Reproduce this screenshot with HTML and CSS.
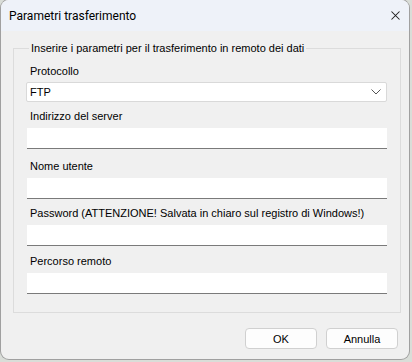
FILE: index.html
```html
<!DOCTYPE html>
<html>
<head>
<meta charset="utf-8">
<link rel="stylesheet" href="styles.css">
</head>
<body>
<div class="window">
  <div class="titlebar">
    <span class="title">Parametri trasferimento</span>
    <svg class="close" width="9" height="9" viewBox="0 0 9 9"><path d="M0.5 0.5 L8.5 8.5 M8.5 0.5 L0.5 8.5" stroke="#1a1a1a" stroke-width="1.05" fill="none"/></svg>
  </div>
  <div class="content">
    <fieldset class="group">
      <legend>Inserire i parametri per il trasferimento in remoto dei dati</legend>
      <div class="field f-proto">
        <label>Protocollo</label>
        <div class="select"><span>FTP</span>
          <svg width="10" height="6" viewBox="0 0 10 6"><path d="M0.5 0.5 L5 5 L9.5 0.5" stroke="#555" stroke-width="1" fill="none"/></svg>
        </div>
      </div>
      <div class="field f-server">
        <label>Indirizzo del server</label>
        <div class="input"></div>
      </div>
      <div class="field f-user">
        <label>Nome utente</label>
        <div class="input"></div>
      </div>
      <div class="field f-pass">
        <label>Password (ATTENZIONE! Salvata in chiaro sul registro di Windows!)</label>
        <div class="input"></div>
      </div>
      <div class="field f-path">
        <label>Percorso remoto</label>
        <div class="input"></div>
      </div>
    </fieldset>
    <div class="buttons">
      <button class="btn">OK</button>
      <button class="btn">Annulla</button>
    </div>
  </div>
</div>
</body>
</html>
```
FILE: styles.css
```css
html, body {
  margin: 0;
  padding: 0;
  width: 412px;
  height: 362px;
  overflow: hidden;
  background: #d9ddd8;
}
body {
  padding: 0 3px 3px 1px;
  box-sizing: border-box;
}
.window {
  width: 408px;
  height: 359px;
  background: #f0f0f0;
  border-radius: 8px;
  box-shadow: 0 0 0 1px #a0a0a0;
  overflow: hidden;
  display: flex;
  flex-direction: column;
}
.titlebar {
  height: 31px;
  flex: none;
  background: #eef2f9;
  display: flex;
  align-items: center;
  justify-content: space-between;
  padding: 0 9px 0 8px;
  box-sizing: border-box;
}
.title {
  font-family: Roboto, "Liberation Sans", sans-serif;
  font-size: 12px;
  color: #000;
}
.close { display: block; }
.content {
  font-family: "Liberation Sans", Arial, sans-serif;
  font-size: 11px;
  color: #000;
  padding: 11px 8px 0 12px;
  display: flex;
  flex-direction: column;
}
.group {
  margin: 0;
  border: 1px solid #dcdcdc;
  padding: 0 13px 18px 12px;
}
.group legend {
  padding: 0 2px;
  margin-left: 3px;
  line-height: 13px;
}
.field {
  display: flex;
  flex-direction: column;
}
.f-proto { margin-top: 10px; }
.f-server { margin-top: 8px; }
.f-user { margin-top: 11px; }
.f-pass { margin-top: 8px; }
.f-path { margin-top: 9px; }
.field label {
  padding-left: 4px;
  line-height: 13px;
  margin-bottom: 5px;
}
.f-proto label { margin-bottom: 4px; }
.select {
  height: 20px;
  box-sizing: border-box;
  background: #fff;
  border: 1px solid #d9d9d9;
  border-radius: 2px;
  display: flex;
  align-items: center;
  justify-content: space-between;
  padding: 0 5px 0 3px;
}
.input {
  height: 21px;
  box-sizing: border-box;
  background: #fff;
  border-bottom: 1px solid #7a7a7a;
  margin-left: 1px;
}
.buttons {
  display: flex;
  justify-content: flex-end;
  gap: 9px;
  margin-top: 15px;
  padding-right: 3px;
}
.btn {
  width: 72px;
  height: 21px;
  font-family: "Liberation Sans", Arial, sans-serif;
  font-size: 11px;
  color: #000;
  background: #fdfdfd;
  border: 1px solid #d0d0d0;
  border-radius: 4px;
  padding: 0;
}
```
